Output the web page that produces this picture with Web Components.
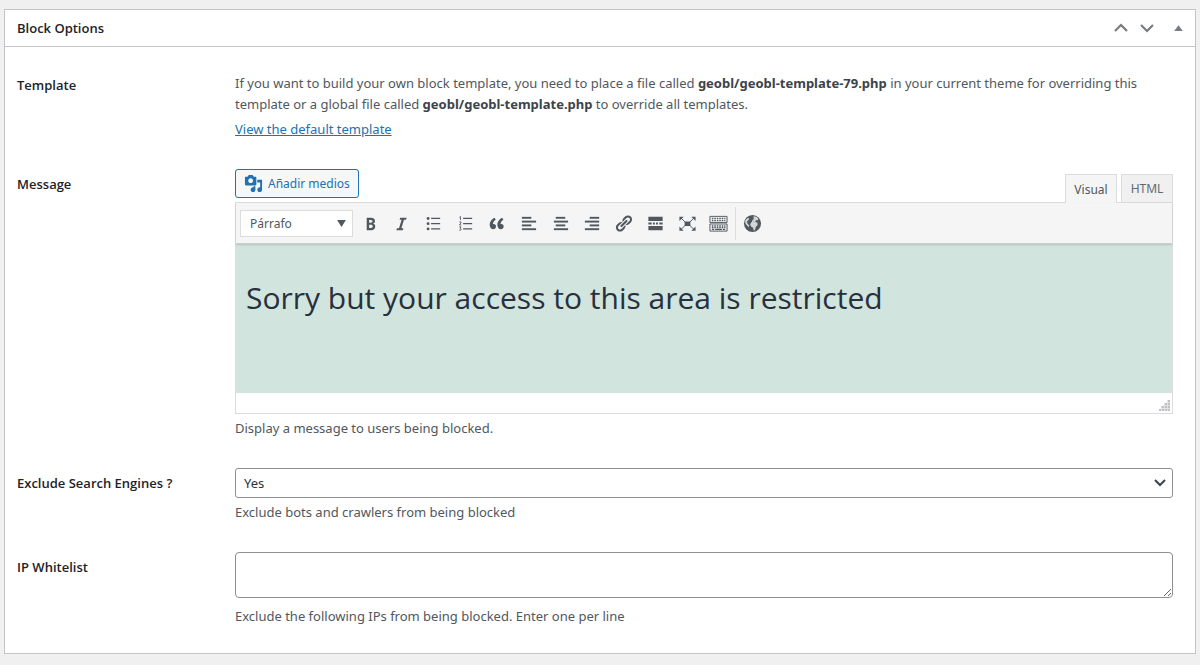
<!DOCTYPE html>
<html lang="en">
<head>
<meta charset="utf-8">
<title>Block Options</title>
<style>
  body { margin: 9px 4px; background: #f0f0f1; color: #3c434a; font: 13px/21px "Noto Sans", "Open Sans", sans-serif; }
</style>
</head>
<body>
<options-panel heading="Block Options">
  <option-row label="Template">
    <template-help></template-help>
  </option-row>
  <option-row label="Message">
    <message-editor></message-editor>
    <help-text>Display a message to users being blocked.</help-text>
  </option-row>
  <choice-field label="Exclude Search Engines ?"></choice-field>
  <list-field label="IP Whitelist"></list-field>
</options-panel>

<script>
const define = (name, render) => customElements.define(name, class extends HTMLElement {
  connectedCallback() {
    if (this.shadowRoot) return;
    this.attachShadow({ mode: 'open' }).innerHTML =
      '<style>*,*::before,*::after{box-sizing:border-box}:host{display:block}</style>' + render(this);
  }
});

const lines = (rows) => rows.map(([x, y, w]) => `<rect x="${x}" y="${y}" width="${w}" height="2"/>`).join('');
const icons = {
  bold: '<path d="M6 4v13h4.54c1.37 0 2.46-.33 3.26-1 .8-.66 1.2-1.58 1.2-2.77 0-.84-.17-1.51-.51-2.01s-.9-.85-1.67-1.03v-.09c.57-.1 1.02-.4 1.36-.9s.51-1.13.51-1.91c0-1.14-.39-1.98-1.17-2.5C12.75 4.26 11.5 4 9.78 4H6zm2.57 5.15V6.26h1.36c.73 0 1.27.11 1.61.32.34.22.51.58.51 1.07 0 .54-.16.92-.47 1.15s-.82.35-1.51.35h-1.5zm0 2.19h1.6c1.44 0 2.16.53 2.16 1.61 0 .6-.17 1.05-.51 1.34s-.86.43-1.57.43H8.57v-3.38z"/>',
  italic: '<path d="M14.78 6h-2.13l-2.8 9h2.12l-.62 2H4.6l.62-2h2.14l2.8-9H8.03l.62-2h6.75z"/>',
  bullets: '<circle cx="4.3" cy="4.7" r="1.5"/><circle cx="4.3" cy="10.2" r="1.5"/><circle cx="4.3" cy="15.7" r="1.5"/><path d="M7.5 4H17v1.3H7.5zM7.5 9.5H17v1.3H7.5zM7.5 15H17v1.3H7.5z"/>',
  numbers: '<path d="M7.500 4h9.500v1.300H7.500zM7.500 9.500h9.500v1.300H7.500zM7.500 15h9.500v1.300H7.500z"/><path fill="none" stroke="currentColor" stroke-width=".9" d="M3.700 3.400l1-.8V6.300M3.500 8.300h1.700v1.200l-1.600 2h1.900M3.500 13.500h1.800l-1 1.400 1.200.9-.6 1.200H3.400"/>',
  quote: '<path d="M9.49 13.22c0-.74-.2-1.38-.61-1.9-.62-.78-1.83-.88-2.53-.72-.29-1.65 1.11-3.75 2.92-4.65L7.88 4c-2.73 1.3-5.42 4.28-4.96 8.05C3.21 14.43 4.59 16 6.54 16c.85 0 1.56-.25 2.12-.75s.83-1.18.83-2.03zm8.05 0c0-.74-.2-1.38-.61-1.9-.63-.78-1.83-.88-2.53-.72-.29-1.65 1.11-3.75 2.92-4.65L15.93 4c-2.73 1.3-5.41 4.28-4.95 8.05.29 2.38 1.66 3.95 3.61 3.95.85 0 1.56-.25 2.12-.75s.83-1.18.83-2.03z"/>',
  left: lines([[3, 3, 10], [3, 7, 15], [3, 11, 10], [3, 15, 15]]),
  center: lines([[5, 3, 10], [3, 7, 15], [5, 11, 10], [3, 15, 15]]),
  right: lines([[7, 3, 10], [2, 7, 15], [7, 11, 10], [2, 15, 15]]),
  link: '<path d="M17.74 2.76c1.68 1.69 1.68 4.41 0 6.1l-1.53 1.52c-1.12 1.12-2.7 1.47-4.14 1.09l2.62-2.61.76-.77.76-.76c.84-.84.84-2.2 0-3.04-.84-.85-2.2-.85-3.04 0l-.77.76-3.38 3.38c-.37-1.44-.02-3.02 1.1-4.14l1.52-1.53c1.69-1.68 4.42-1.68 6.1 0zM8.59 13.43l5.34-5.34c.42-.42.42-1.1 0-1.52-.44-.43-1.13-.39-1.53 0l-5.33 5.34c-.42.42-.42 1.1 0 1.52.44.43 1.13.39 1.52 0zm-.76 2.29l4.14-4.15c.38 1.44.03 3.02-1.09 4.14l-1.52 1.53c-1.69 1.68-4.41 1.68-6.1 0-1.68-1.68-1.68-4.42 0-6.1l1.53-1.52c1.12-1.12 2.7-1.47 4.14-1.1l-4.14 4.15c-.85.84-.85 2.2 0 3.05.84.84 2.2.84 3.04 0z"/>',
  more: '<path d="M2.500 3h15v4.300h-15zM2.500 9h3.500v2H2.500zM7.300 9h2v2h-2zM10.600 9h2v2h-2zM14 9h3.500v2H14zM2.500 12.700h15V17h-15z"/>',
  fullscreen: '<path d="M7 8h6v4.500H7zM1.500 3h4.500L1.500 7.300zM18.500 3v4.300L14 3zM1.500 17.500v-4.300l4.500 4.300zM18.500 17.500H14l4.500-4.300z"/><path stroke="currentColor" d="M3 4l5 5M17 4l-5 5M3 16.500l5-5M17 16.500l-5-5"/>',
  keyboard: '<g fill="none" stroke="currentColor"><path d="M1 2.500h18v6.500H1zM1 10.500h18v7.500H1z"/><path stroke-width="1.500" stroke-dasharray="1.600 1" d="M3 4.700h14.300M3 7h14.300M3 12.500h14.300M3 14.300h14.300"/><path stroke-width="1.300" d="M3 16.300h2.500M6.500 16.300h7M14.500 16.300H17"/></g>',
  globe: '<circle cx="10" cy="10" r="9"/><path fill="#f5f5f5" d="M11 2.300l3 .5 2.200 2-.5 1.700-2.200.2-.7 1.500-1.700-.3-1.600.8.3-2 1.500-1.300zM9 8.500l3.300-.6 2.900 1.300.2 2.300-2 2.300-.6 2.900-1.500.9-.7-3.200-2.200-1.300-.9-2.400zM2.200 7l1.900-2.300 2.400-.4-.5 2-1.800 1.400.6 2.500 1.700 1.700-.4 2-1.900-1.700-1.700-2.300z" opacity=".8"/>',
  media: '<path d="M13 11V4c0-.55-.45-1-1-1h-1.670L9 1H5L3.670 3H2c-.55 0-1 .45-1 1v7c0 .55.45 1 1 1h10c.55 0 1-.45 1-1zM7 4.500c1.380 0 2.500 1.120 2.500 2.500S8.380 9.500 7 9.500 4.500 8.380 4.500 7 5.620 4.500 7 4.500zM14 6h5v10.500c0 1.380-1.120 2.500-2.500 2.500S14 17.880 14 16.500s1.120-2.500 2.500-2.500c.17 0 .34.02.5.05V9h-3V6zm-4 8.050V13h2v3.500c0 1.380-1.120 2.500-2.500 2.500S7 17.880 7 16.500 8.120 14 9.500 14c.17 0 .34.02.5.05z"/>',
  up: '<path fill="none" stroke="currentColor" stroke-width="2.200" d="M4 13l6-6 6 6"/>',
  down: '<path fill="none" stroke="currentColor" stroke-width="2.200" d="M4 7l6 6 6-6"/>',
  toggle: '<path d="M5.500 12.500h9L10 6.500z"/>'
};

define('ui-icon', el => `<style>:host{display:inline-block;width:20px;height:20px}
  :host([small]){width:19px;height:19px} svg{display:block;width:100%;height:100%}</style>
  <svg viewBox="0 0 20 20" fill="currentColor" aria-hidden="true">${icons[el.getAttribute('name')]}</svg>`);

define('options-panel', el => `<style>
  :host{background:#fff;border:1px solid #c3c4c7;box-shadow:0 1px 1px rgba(0,0,0,.04)}
  header{display:flex;align-items:center;justify-content:space-between;height:37px;padding:0 7px 0 12px;border-bottom:1px solid #c3c4c7}
  h2{margin:0;font:600 13px/21px "Open Sans",sans-serif;color:#1d2327}
  nav{display:flex;gap:6px}
  button{display:grid;place-items:center;width:20px;height:24px;padding:0;border:0;background:none;color:#787c82}
  button:last-child{margin-left:5px}
  .rows{display:grid;gap:29px;padding:23px 22px 26px 12px}
  </style>
  <header><h2>${el.getAttribute('heading')}</h2>
  <nav><button type="button" aria-label="Move up"><ui-icon name="up"></ui-icon></button><button type="button" aria-label="Move down"><ui-icon name="down"></ui-icon></button><button type="button" aria-label="Toggle panel"><ui-icon name="toggle" small></ui-icon></button></nav></header>
  <div class="rows"><slot></slot></div>`);

const rowStyle = `:host{display:grid;grid-template-columns:218px minmax(0,1fr)}
  .label{padding-top:5px;font-family:"Open Sans",sans-serif;font-weight:600;color:#1d2327}`;

define('option-row', el => `<style>${rowStyle}</style>
  <div class="label">${el.getAttribute('label')}</div><div><slot></slot></div>`);

define('help-text', () => `<style>:host{margin-top:4px;color:#50575e}</style><slot></slot>`);

define('template-help', () => `<style>
  p{margin:3px 0 4px;color:#50575e} b{font-weight:700;color:#3c434a} a{display:block;width:fit-content;color:#2271b1}
  </style>
  <p>If you want to build your own block template, you need to place a file called <b>geobl/geobl-template-79.php</b> in your current theme for overriding this template or a global file called <b>geobl/geobl-template.php</b> to override all templates.</p>
  <a href="#">View the default template</a>`);

define('choice-field', el => `<style>${rowStyle}
  .pick{display:grid;align-items:center}
  .pick>*{grid-area:1/1}
  select{appearance:none;width:100%;height:30px;padding:0 24px 0 8px;border:1px solid #8c8f94;border-radius:3px;background:#fff;color:#2c3338;font:inherit}
  svg{justify-self:end;width:12px;height:12px;margin-right:7px;pointer-events:none}
  </style>
  <label class="label" for="f">${el.getAttribute('label')}</label>
  <div><div class="pick"><select id="f"><option>Yes</option><option>No</option></select>
  <svg viewBox="0 0 12 12" fill="none" stroke="#3c434a" stroke-width="2"><path d="M1 3l5 5 5-5"/></svg></div>
  <help-text>Exclude bots and crawlers from being blocked</help-text></div>`);

define('list-field', el => `<style>${rowStyle}
  textarea{display:block;width:100%;height:46px;margin-bottom:8px;padding:2px 6px;border:1px solid #8c8f94;border-radius:4px;background:#fff;color:#2c3338;font:inherit;resize:vertical}
  </style>
  <label class="label" for="f">${el.getAttribute('label')}</label>
  <div><textarea id="f"></textarea>
  <help-text>Exclude the following IPs from being blocked. Enter one per line</help-text></div>`);

define('editor-toolbar', () => {
  const tools = [['bold', 'Bold'], ['italic', 'Italic'], ['bullets', 'Bulleted list'], ['numbers', 'Numbered list'], ['quote', 'Blockquote'], ['left', 'Align left'], ['center', 'Align center'], ['right', 'Align right'], ['link', 'Insert link'], ['more', 'Read more'], ['fullscreen', 'Fullscreen'], ['keyboard', 'Toolbar toggle']];
  const button = ([icon, label]) => `<button type="button" aria-label="${label}"><ui-icon name="${icon}" small></ui-icon></button>`;
  return `<style>
  :host{display:flex;align-items:center;height:41px;padding:0 4px;background:#f5f5f5;border-bottom:1px solid #c8d0cd;box-shadow:0 1px 2px rgba(0,0,0,.14);position:relative}
  .pick{display:grid;align-items:center;width:113px;margin-right:3px}
  .pick>*{grid-area:1/1}
  select{appearance:none;width:100%;height:27px;padding:0 9px;border:1px solid #dcdcde;border-radius:0;background:#fff;color:#50575e;font:inherit;font-size:12px}
  svg{justify-self:end;width:9px;height:7px;margin-right:7px;pointer-events:none}
  .tools{display:flex;justify-content:space-between;width:377px;margin-right:2px}
  .extra{display:flex;align-items:center;height:33px;padding-left:2px;border-left:1px solid #dcdcde}
  button{display:grid;place-items:center;width:28px;height:28px;padding:0;border:0;background:none;color:#50575e}
  </style>
  <div class="pick"><select aria-label="Format"><option>Párrafo</option></select><svg viewBox="0 0 10 8" fill="#50575e"><path d="M0 0h10L5 8z"/></svg></div>
  <div class="tools">${tools.map(button).join('')}</div><div class="extra">${button(['globe', 'Geolocation'])}</div>`;
});

define('message-editor', () => `<style>
  .top{display:flex;justify-content:space-between;align-items:flex-end;height:33px}
  .media{align-self:flex-start;display:flex;align-items:center;gap:5px;width:124px;height:29px;padding:0 7px 0 8px;border:1px solid #2271b1;border-radius:3px;background:#f6f7f7;color:#2271b1;font:12px/21px "Noto Sans",sans-serif;white-space:nowrap}
  .tabs{display:flex;gap:4px}
  .tabs button{width:52px;height:28px;padding:0;border:1px solid #dcdcde;border-bottom:0;background:#f0f0f1;color:#646970;font:12px/21px "Noto Sans",sans-serif}
  .tabs button[aria-selected=true]{height:29px;margin-bottom:-1px;background:#f5f5f5;color:#50575e;position:relative}
  .box{border:1px solid #dcdcde;background:#fff}
  .body{min-height:149px;padding:32px 10px;background:#d1e4dd;color:#28303d}
  h2{margin:0;font:400 30px/44px "Open Sans",sans-serif}
  .status{display:flex;justify-content:flex-end;align-items:flex-end;height:20px;padding:2px}
  .status svg{width:11px;height:11px}
  </style>
  <div class="top"><button type="button" class="media"><ui-icon name="media" small></ui-icon>Añadir medios</button>
  <div class="tabs" role="tablist"><button type="button" role="tab" aria-selected="true">Visual</button><button type="button" role="tab" aria-selected="false">HTML</button></div></div>
  <div class="box"><editor-toolbar></editor-toolbar>
  <div class="body" contenteditable="true" role="textbox" aria-label="Message"><h2>Sorry but your access to this area is restricted</h2></div>
  <div class="status"><svg viewBox="0 0 11 11" fill="#e2e3e5"><path d="M8 0h3v11H8zM5 3h3v8H5zM2 6h3v5H2zM0 9h2v2H0z"/><path fill="#bdbfc2" d="M9 0h2v2H9zM9 3h2v2H9zM6 3h2v2H6zM9 6h2v2H9zM6 6h2v2H6zM3 6h2v2H3zM9 9h2v2H9zM6 9h2v2H6zM3 9h2v2H3zM0 9h2v2H0z"/></svg></div></div>`);
</script>
</body>
</html>
